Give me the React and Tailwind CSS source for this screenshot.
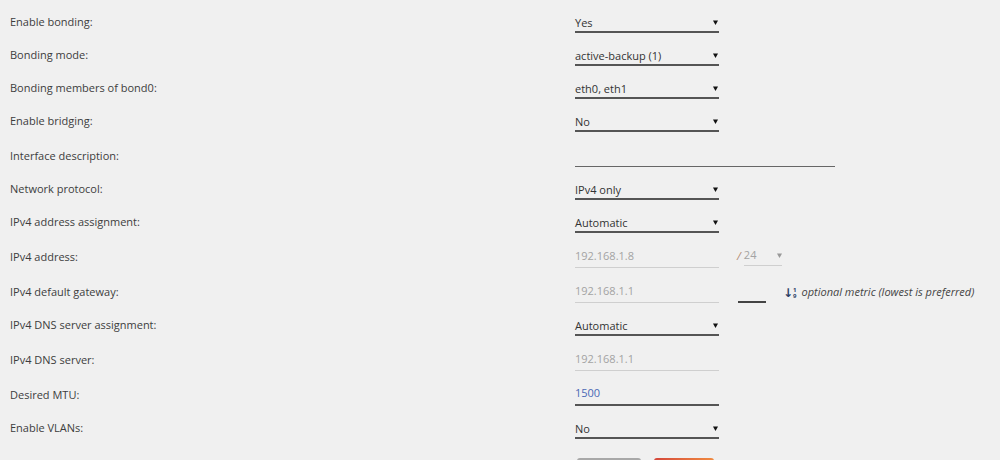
import { Fragment } from 'react';

const font = { fontFamily: '"Open Sans", "DejaVu Sans", sans-serif' };

const rows = [
  { label: 'Enable bonding:', type: 'select', value: 'Yes' },
  { label: 'Bonding mode:', type: 'select', value: 'active-backup (1)' },
  { label: 'Bonding members of bond0:', type: 'select', value: 'eth0, eth1' },
  { label: 'Enable bridging:', type: 'select', value: 'No' },
  { label: 'Interface description:', type: 'text', value: '', wide: true },
  { label: 'Network protocol:', type: 'select', value: 'IPv4 only' },
  { label: 'IPv4 address assignment:', type: 'select', value: 'Automatic' },
  { label: 'IPv4 address:', type: 'address', value: '192.168.1.8' },
  { label: 'IPv4 default gateway:', type: 'gateway', value: '192.168.1.1' },
  { label: 'IPv4 DNS server assignment:', type: 'select', value: 'Automatic' },
  { label: 'IPv4 DNS server:', type: 'text', value: '192.168.1.1', disabled: true },
  { label: 'Desired MTU:', type: 'text', value: '1500', accent: true },
  { label: 'Enable VLANs:', type: 'select', value: 'No' },
];

function Caret({ className = 'text-[#111]' }) {
  return (
    <svg width="5" height="5" viewBox="0 0 5 5" className={className}>
      <path d="M0 0.5h5L2.5 5z" fill="currentColor" />
    </svg>
  );
}

function Select({ value }) {
  return (
    <div className="flex h-[33px] w-[144px] items-end justify-between border-b-2 border-[#555] pb-[1px] pr-[1px] text-[11px] text-[#333]">
      <span className="leading-[14px]">{value}</span>
      <span className="mb-[5px]"><Caret /></span>
    </div>
  );
}

function TextField({ value, disabled, accent, wide }) {
  const line = disabled ? 'border-b border-[#cfcfcf]' : wide ? 'border-b-[1.5px] border-[#666]' : 'border-b-2 border-[#555]';
  const color = disabled ? 'text-[#a3a3a3]' : accent ? 'text-[#4a68b5]' : 'text-[#333]';
  return (
    <div className={`flex h-[35px] items-end pb-[4px] text-[11px] ${line} ${color} ${wide ? 'w-[260px]' : 'w-[144px]'}`}>
      <span className="leading-[14px]">{value}</span>
    </div>
  );
}

function Field({ row }) {
  if (row.type === 'select') return <Select value={row.value} />;
  if (row.type === 'text') return <TextField {...row} />;
  if (row.type === 'address') {
    return (
      <div className="flex items-end">
        <TextField value={row.value} disabled />
        <div className="mb-[2px] ml-[18px] flex items-end text-[11px] text-[#a3a3a3]">
          <span className="mb-[3px] mr-[3px] leading-[14px] italic text-[#b08a70]">/</span>
          <div className="flex w-[38px] items-end justify-between border-b border-[#cfcfcf] pb-[3px]">
            <span className="leading-[14px]">24</span>
            <span className="mb-[4px]"><Caret className="text-[#999]" /></span>
          </div>
        </div>
      </div>
    );
  }
  return (
    <div className="flex items-end">
      <TextField value={row.value} disabled />
      <div className="ml-[19px] h-[35px] w-[28px] border-b-2 border-[#444]" />
      <div className="mb-[4px] ml-[17px] flex items-end text-[11px] text-[#444]">
        <span className="mr-[5px] flex items-end leading-none">
          <span className="text-[12px] font-bold leading-[12px] text-[#2d3f66]">↓</span>
          <span className="flex flex-col text-[6px] font-bold leading-[6px] text-[#2d3f66]">
            <span>1</span>
            <span>9</span>
          </span>
        </span>
        <span className="italic leading-[14px]">optional metric (lowest is preferred)</span>
      </div>
    </div>
  );
}

export default function App() {
  return (
    <div className="min-h-[460px] w-[1000px] overflow-hidden bg-[#f0f0f0]" style={font}>
      <div className="grid grid-cols-[575px_1fr]">
        {rows.map((row) => (
          <Fragment key={row.label}>
            <div className={`flex items-end pb-[4px] pl-[10px] text-[11px] text-[#3d3d3d] ${row.type === 'select' ? 'h-[33px]' : 'h-[35px]'}`}>
              <span className="leading-[14px]">{row.label}</span>
            </div>
            <div className="flex items-end">
              <Field row={row} />
            </div>
          </Fragment>
        ))}
      </div>
      {/* save / apply buttons below the form */}
      <div className="ml-[577px] mt-[19px] flex gap-[13px]">
        <button className="h-[28px] w-[64px] rounded-t-[3px] bg-[#a8a8a8]" />
        <button className="h-[28px] w-[60px] rounded-t-[3px] bg-gradient-to-r from-[#d4463a] to-[#f08a40]" />
      </div>
    </div>
  );
}
